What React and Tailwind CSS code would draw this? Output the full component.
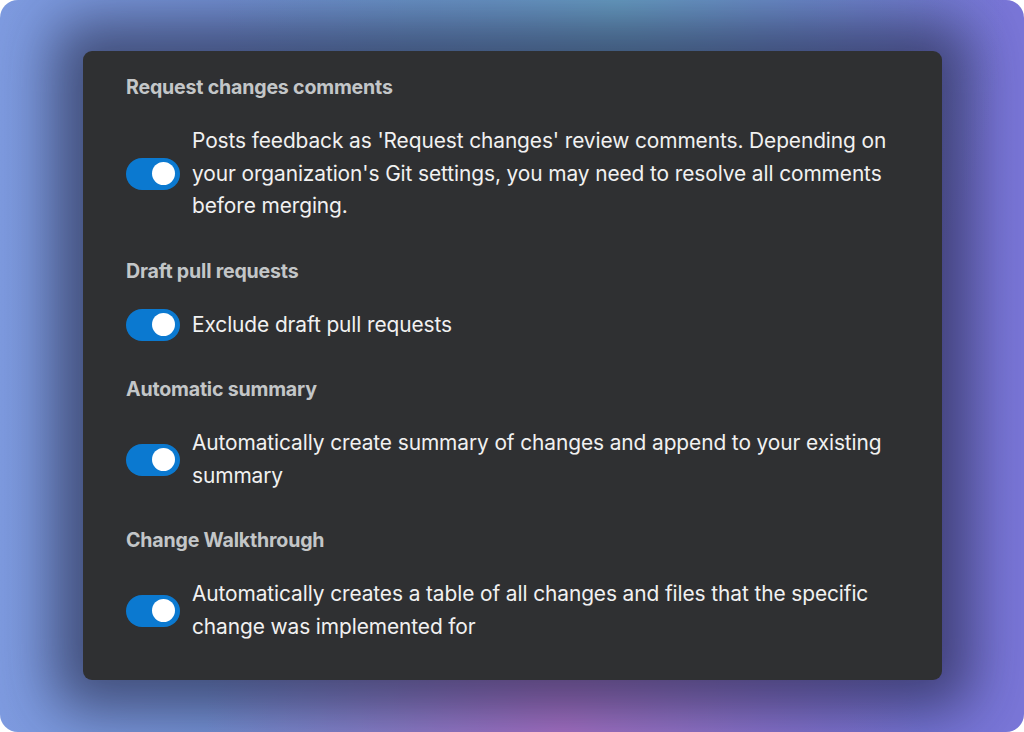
const SETTINGS = [
  {
    title: 'Request changes comments',
    text: "Posts feedback as 'Request changes' review comments. Depending on your organization's Git settings, you may need to resolve all comments before merging.",
  },
  { title: 'Draft pull requests', text: 'Exclude draft pull requests' },
  {
    title: 'Automatic summary',
    text: 'Automatically create summary of changes and append to your existing summary',
  },
  {
    title: 'Change Walkthrough',
    text: 'Automatically creates a table of all changes and files that the specific change was implemented for',
  },
]

function Toggle() {
  return (
    <div className="w-[54px] h-[32px] shrink-0 rounded-full bg-[#0b79d0] flex items-center justify-end pr-[5px]">
      <div className="w-[23px] h-[23px] rounded-full bg-white" />
    </div>
  )
}

export default function App() {
  return (
    <div className="w-[1024px] h-[732px] bg-white font-['Inter',sans-serif]">
      <div className="w-full h-full rounded-[18px] overflow-hidden bg-[radial-gradient(ellipse_at_60%_0%,#6aa3c9_0%,transparent_45%),radial-gradient(ellipse_at_55%_100%,#a872c8_0%,transparent_45%),linear-gradient(90deg,#7e9be0_0%,#6f8fd2_40%,#7275d6_75%,#7a76d8_100%)] pt-[51px] pl-[83px]">
        <div className="w-[859px] h-[629px] rounded-[9px] bg-[#2f3032] shadow-[0_0_55px_30px_rgba(28,30,58,0.6)] pt-[26px] pl-[43px]">
          {SETTINGS.map((s, i) => (
            <section key={s.title} className={i > 0 ? 'mt-[38px]' : ''}>
              <h3 className="h-[20px] leading-[20px] text-[19.6px] font-bold text-[#c3c6c8] tracking-[-0.2px]">
                {s.title}
              </h3>
              <div className="mt-[28px] flex items-center gap-[12px]">
                <Toggle />
                <p className="max-w-[712px] text-[20.9px] leading-[32.5px] text-[#f1f1f1] tracking-[-0.1px]">{s.text}</p>
              </div>
            </section>
          ))}
        </div>
      </div>
    </div>
  )
}
